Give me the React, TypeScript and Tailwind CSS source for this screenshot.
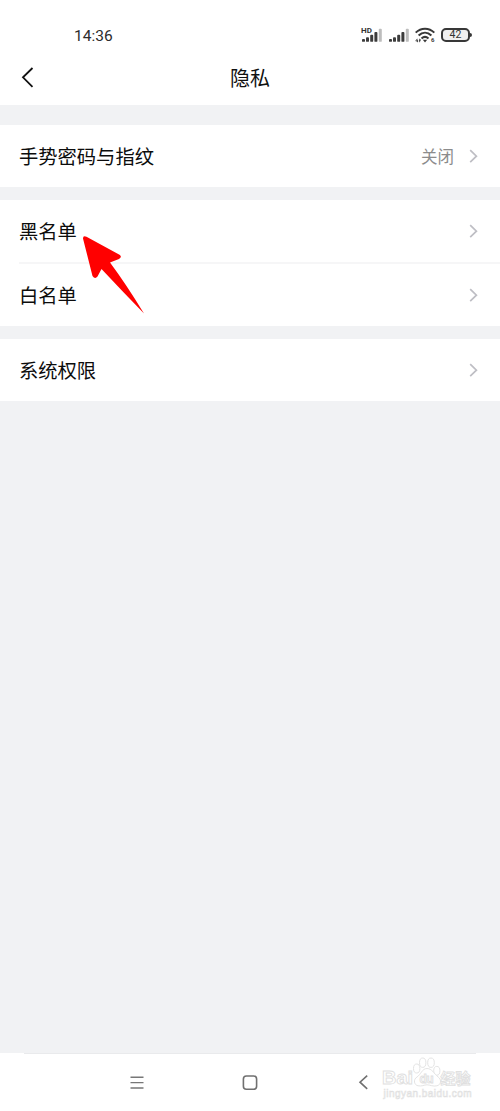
import React from 'react';

interface SettingItem {
  label: string;
  value?: string;
}

const groups: SettingItem[][] = [
  [{ label: '手势密码与指纹', value: '关闭' }],
  [{ label: '黑名单' }, { label: '白名单' }],
  [{ label: '系统权限' }],
];

const SignalBars = () => (
  <svg width="22" height="14" viewBox="0 0 22 14" fill="#3c3c3c">
    <rect x="1" y="11" width="3" height="2.8" rx="0.9" />
    <rect x="5" y="9.3" width="3" height="4.5" rx="0.9" />
    <rect x="9.2" y="6.8" width="3" height="7" rx="0.9" />
    <rect x="13.4" y="4" width="3" height="9.8" rx="0.9" />
    <rect x="17.8" y="0.8" width="3" height="13" rx="0.9" fill="#bdbdbd" />
  </svg>
);

const WifiIcon = () => (
  <svg width="20" height="18" viewBox="0 -1 20 18" fill="none" stroke="#383838" strokeWidth="2">
    <path d="M.7 5.6C6 .3 14 .3 19.3 5.6" />
    <path d="M3.6 8.6C7.5 4.9 12.5 4.9 16.4 8.6" />
    <path d="M6.5 11.4C8.8 9.4 11.2 9.4 13.5 11.4" />
    <path d="M7.8 12.8h4.4L10 15.4z" fill="#383838" stroke="none" />
    <path d="M2.2 11.8L.8 14h2.4M2.5 12.6v2.6" strokeWidth="0.8" />
    <path d="M4.6 15.2V12l1.2 1M4 13.6h1.6" strokeWidth="0.8" />
    <text x="15.9" y="15.2" fontSize="6" fontWeight="700" fill="#383838" stroke="none" className="font-[Roboto,sans-serif]">6</text>
  </svg>
);

const StatusBar = () => (
  <div className="flex h-[50px] items-start pt-[26px]">
    <span className="ml-[74px] font-[Roboto,sans-serif] text-[15.5px] leading-[20px] text-[#2c2c2c]">14:36</span>
    <div className="relative mr-[28px] ml-auto flex h-[18px] items-center">
      <span className="absolute top-0 left-0 font-[Roboto,sans-serif] text-[8px] leading-[9px] font-bold text-[#333]">HD</span>
      <div className="pr-[5px]"><SignalBars /></div>
      <div className="pr-[5px]"><SignalBars /></div>
      <WifiIcon />
      <div className="ml-[6px] flex h-[14px] w-[29px] items-center justify-center rounded-[5px] border-2 border-[#383838] bg-[#f0f0f0] font-[Roboto,sans-serif] text-[10.5px] leading-none text-[#333]">42</div>
      <div className="h-[4px] w-[2px] rounded-r bg-[#383838]" />
    </div>
  </div>
);

const Chevron = () => (
  <svg className="mr-[22px] ml-[15px]" width="9" height="14" viewBox="0 0 9 14" fill="none" stroke="#bebec4" strokeWidth="1.7">
    <path d="M1.2 1.2l6.2 6-6.2 6" />
  </svg>
);

const Row = ({ item, divider }: { item: SettingItem; divider: boolean }) => (
  <div className={`pl-[19px] ${divider ? 'h-[64px]' : 'h-[62px]'}`}>
    <div className={`flex h-full items-center ${divider ? 'border-b-2 border-[#f6f6f7]' : ''}`}>
      <span className="flex-1 pt-px text-[19.3px] text-[#0c0c0c]">{item.label}</span>
      {item.value && <span className="text-[16.5px] text-[#8c8c8c]">{item.value}</span>}
      <Chevron />
    </div>
  </div>
);

const Watermark = () => (
  <svg
    className="absolute top-[4px] left-[380px] font-['Liberation_Sans','Noto_Sans_CJK_SC',sans-serif]"
    width="100"
    height="50"
    viewBox="0 0 100 50"
    fill="#fff"
    stroke="#e0e0e0"
    strokeWidth="0.9"
  >
    <text x="2" y="27" fontSize="19" fontWeight="700" textLength="31" lengthAdjust="spacingAndGlyphs">Bai</text>
    <ellipse cx="36.7" cy="11.5" rx="3.2" ry="4.5" />
    <ellipse cx="42.7" cy="5.7" rx="3.2" ry="4.7" />
    <ellipse cx="51" cy="5.7" rx="3.3" ry="4.7" />
    <ellipse cx="56.8" cy="13.8" rx="3.1" ry="4.4" />
    <path d="M47 11.5c-5 0-6 6-10 8.5s-3 8 1 8.8 6-1 9-1 6 2 10 1 5-6 1-9-6-8.3-11-8.3z" />
    <text x="39.5" y="25.5" fontSize="12" fontWeight="700" textLength="14">du</text>
    <text x="60.5" y="26.5" fontSize="15" fontWeight="700" textLength="30">经验</text>
    <text x="3.5" y="40.2" fontSize="10" strokeWidth="0.6" textLength="88">jingyan.baidu.com</text>
  </svg>
);

const NavBar = () => (
  <div className="relative h-[58px] bg-white">
    <div className="mx-6 h-px bg-[#e9eaec]" />
    <div className="flex h-[57px] items-center">
      <svg className="ml-[130px]" width="14" height="14" viewBox="0 0 14 14" stroke="#777" strokeWidth="1.4">
        <path d="M.5 1.2h13M.5 6.6h13M.5 12h13" />
      </svg>
      <svg className="ml-[98px]" width="16" height="16" viewBox="0 0 16 16" fill="none" stroke="#707070" strokeWidth="1.6">
        <rect x="1.4" y="1" width="13.2" height="13.2" rx="3" />
      </svg>
      <svg className="ml-[100px]" width="10" height="15" viewBox="0 0 10 15" fill="none" stroke="#707070" strokeWidth="1.6">
        <path d="M9.2.6L2 7.2l7.2 6.6" />
      </svg>
    </div>
    <Watermark />
  </div>
);

const App: React.FC = () => {
  return (
    <div className="relative flex h-[1111px] w-[500px] flex-col overflow-hidden bg-[#f1f2f4] font-['Noto_Sans_CJK_SC',sans-serif]">
      <div className="h-[105px] bg-white">
        <StatusBar />
        <div className="grid h-[55px] grid-cols-3 items-center">
          <svg className="ml-[21px]" width="14" height="21" viewBox="0 0 14 21" fill="none" stroke="#111" strokeWidth="1.8">
            <path d="M11.5 1L2 10.3l9.5 9.5" />
          </svg>
          <h1 className="text-center text-[20px] text-[#111]">隐私</h1>
        </div>
      </div>

      <div className="flex flex-col gap-[13px] pt-5">
        {groups.map((group, index) => (
          <div key={index} className="flex flex-col bg-white">
            {group.map((item, i) => (
              <Row key={item.label} item={item} divider={i < group.length - 1} />
            ))}
          </div>
        ))}
      </div>

      {/* pointer to the blacklist row */}
      <svg className="absolute top-[235px] left-[81px]" width="64" height="80" viewBox="0 0 64 80" fill="#ff0000">
        <path d="M2 3.5Q2 .2 5.5 1.8L38.5 19.8Q41.5 22 38 24L29 27.5Q45 49 63 78.5Q42 57 20.5 34L16.5 41.5Q14 44.5 11.5 41Z" />
      </svg>

      <div className="mt-auto">
        <NavBar />
      </div>
    </div>
  );
};

export default App;
